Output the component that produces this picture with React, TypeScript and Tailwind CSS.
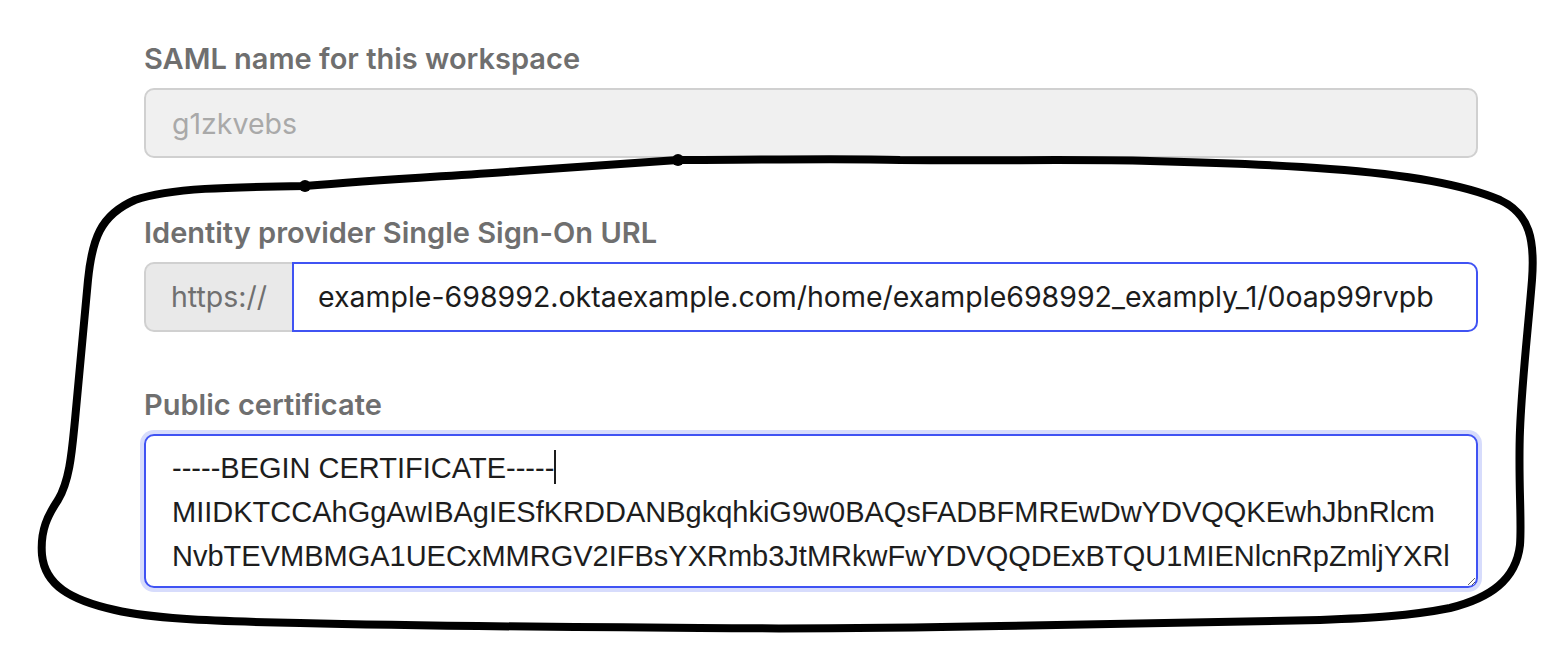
import React, { useEffect, useRef } from 'react';

const certificate = [
  '-----BEGIN CERTIFICATE-----',
  'MIIDKTCCAhGgAwIBAgIESfKRDDANBgkqhkiG9w0BAQsFADBFMREwDwYDVQQKEwhJbnRlcm',
  'NvbTEVMBMGA1UECxMMRGV2IFBsYXRmb3JtMRkwFwYDVQQDExBTQU1MIENlcnRpZmljYXRl',
  'MB4XDTE5MTIxNjE4MjcyMloXDTI5MTIxNjE4MjcyMlowRTERMA8GA1UEChMISW50ZXJj',
  'b20xFTATBgNVBAsTDERldiBQbGF0Zm9ybTEZMBcGA1UEAxMQU0FNTCBDZXJ0aWZpY2F0',
  '-----END CERTIFICATE-----',
].join('\n');

// Hand-drawn marker loop around the IdP fields
const Scribble: React.FC = () => (
  <svg
    className="pointer-events-none absolute left-0 top-0"
    width="1556"
    height="670"
    viewBox="0 0 1556 670"
    fill="none"
  >
    <path
      d="M305 186 C 380 180 450 176 520 171 C 580 167 630 163 678 160 C 760 160 840 158 900 160 C 1000 161 1080 159 1150 161 C 1230 163 1280 165 1330 169 C 1400 174 1460 183 1500 200 C 1530 214 1535 240 1532 280 C 1528 330 1522 380 1520 430 C 1518 480 1522 520 1520 545 C 1516 580 1490 598 1450 608 C 1410 616 1370 618 1320 620 C 1200 622 1100 624 1000 626 C 900 628 800 629 700 628 C 550 627 420 626 300 623 C 200 621 150 618 115 610 C 70 600 45 585 42 555 C 40 530 48 515 58 500 C 70 480 72 450 75 420 C 80 370 84 320 88 280 C 92 240 100 215 135 200 C 170 188 230 187 305 186 Z"
      stroke="#000"
      strokeWidth="8"
      strokeLinejoin="round"
      strokeLinecap="round"
    />
    <circle cx="305" cy="186" r="6" fill="#000" />
    <circle cx="678" cy="160" r="6" fill="#000" />
  </svg>
);

const Label: React.FC<{ children: React.ReactNode }> = ({ children }) => (
  <label className="block text-[29px] leading-[36px] font-semibold text-[#6f6f6f] font-['Inter',sans-serif] mb-[11px]">
    {children}
  </label>
);

export default function App() {
  const certRef = useRef<HTMLTextAreaElement>(null);

  useEffect(() => {
    const el = certRef.current;
    if (el) {
      el.focus();
      el.setSelectionRange(27, 27);
      el.scrollTop = 0;
    }
  }, []);

  return (
    <div className="relative min-h-[670px] w-full bg-white overflow-hidden">
      <div className="pl-[144px] pr-[78px] pt-[41px] flex flex-col font-['Inter',sans-serif]">
        {/* SAML name */}
        <div>
          <Label>SAML name for this workspace</Label>
          <input
            readOnly
            value="g1zkvebs"
            className="block w-full h-[70px] rounded-[10px] border-2 border-[#d0d0d0] bg-[#f0f0f0] px-[26px] text-[28.5px] text-[#a9a9a9] outline-none"
          />
        </div>

        {/* SSO URL */}
        <div className="mt-[57px]">
          <Label>Identity provider Single Sign-On URL</Label>
          <div className="flex h-[70px]">
            <span className="flex items-center justify-center w-[148px] rounded-l-[10px] border-2 border-r-0 border-[#d0d0d0] bg-[#e9e9e9] text-[28.5px] text-[#707070]">
              https://
            </span>
            <input
              readOnly
              value="example-698992.oktaexample.com/home/example698992_examply_1/0oap99rvpb"
              className="flex-1 min-w-0 rounded-r-[10px] border-2 border-[#4053f3] bg-white px-[24px] text-[28.5px] text-[#1c1c1c] outline-none"
            />
          </div>
        </div>

        {/* Certificate */}
        <div className="mt-[55px]">
          <Label>Public certificate</Label>
          <div className="relative">
            <textarea
              ref={certRef}
              defaultValue={certificate}
              wrap="off"
              spellCheck={false}
              className="block w-full h-[154px] rounded-[10px] border-2 border-[#4053f3] ring-4 ring-[#d7dcfc] bg-white px-[26px] pt-[10px] text-[29px] leading-[44px] font-['Liberation_Sans',Arial,sans-serif] text-[#1d1d1d] caret-transparent whitespace-pre overflow-hidden outline-none resize-y"
            />
            {/* caret after the first line */}
            <div className="pointer-events-none absolute left-[2px] top-[2px] px-[26px] pt-[10px] text-[29px] leading-[44px] font-['Liberation_Sans',Arial,sans-serif] text-transparent whitespace-pre">
              -----BEGIN CERTIFICATE-----
              <span className="inline-block w-[2px] h-[34px] align-[-6px] bg-[#1d1d1d]" />
            </div>
          </div>
        </div>
      </div>
      <Scribble />
    </div>
  );
}
